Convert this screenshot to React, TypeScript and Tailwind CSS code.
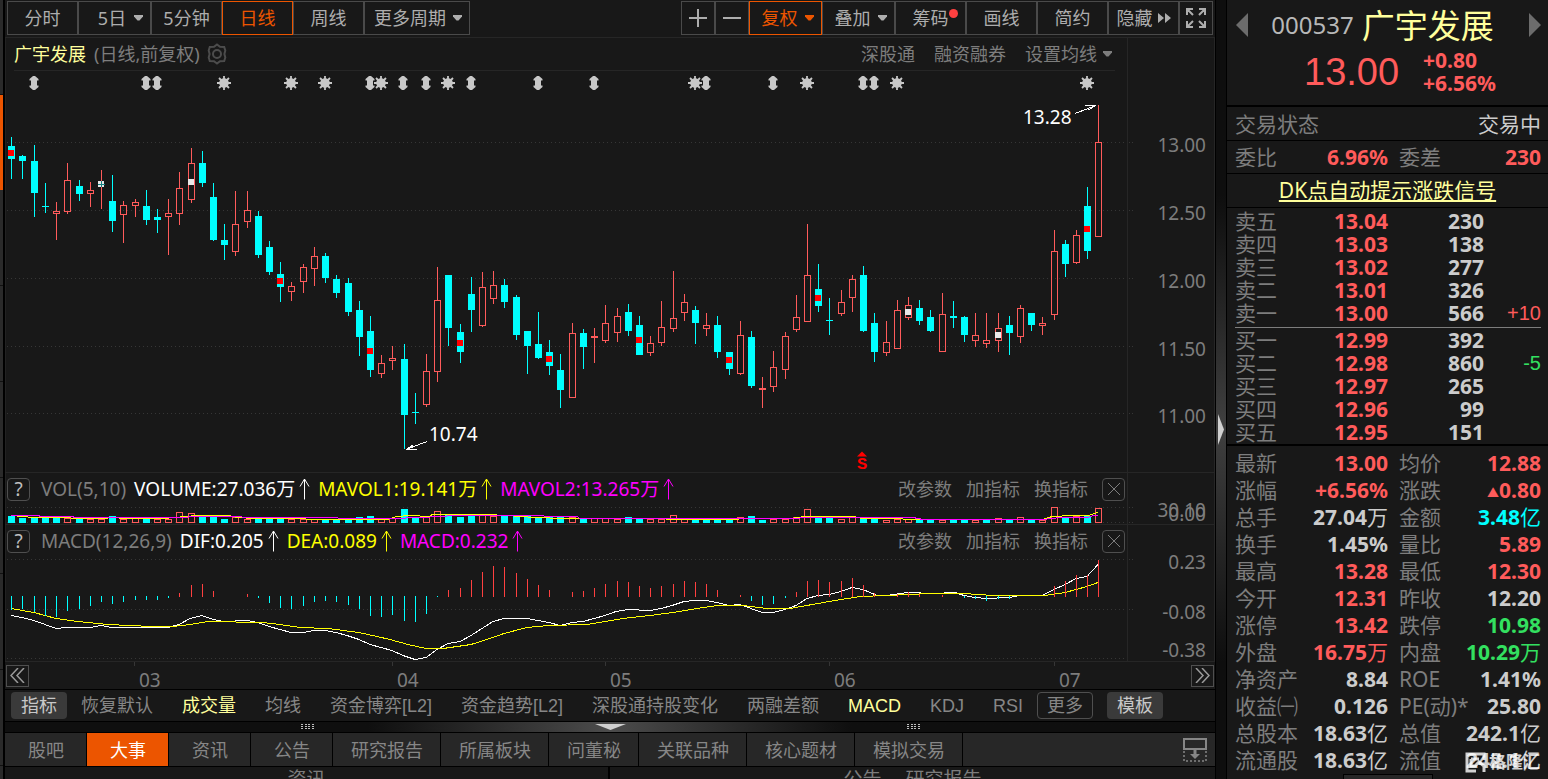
import type { ReactNode } from 'react';

type Tone = 'red' | 'green' | 'cyan' | 'plain';

const toneClass: Record<Tone, string> = {
  red: 'text-[#ff5b5b]',
  green: 'text-[#33e060]',
  cyan: 'text-[#00ffff]',
  plain: 'text-[#cccccc]',
};

const RED = '#ff5b5b';
const CYAN = '#00ffff';

// direction, high, body top, body bottom, low
type Candle = ['u' | 'd', number, number, number, number];

const candles: Candle[] = [
  ['d', 137, 146, 159, 179], ['d', 155, 156, 161, 179], ['d', 145, 161, 193, 217], ['d', 183, 206, 207, 213],
  ['u', 202, 211, 214, 240], ['u', 163, 180, 212, 214], ['d', 180, 186, 194, 201], ['u', 182, 190, 194, 207],
  ['u', 170, 184, 185, 209], ['d', 175, 201, 221, 232], ['u', 201, 205, 215, 243], ['u', 199, 202, 206, 217],
  ['d', 190, 206, 220, 225], ['d', 209, 217, 220, 233], ['u', 199, 213, 217, 255], ['u', 172, 188, 214, 225],
  ['u', 148, 163, 200, 203], ['d', 151, 163, 183, 187], ['d', 183, 197, 240, 241], ['d', 224, 240, 245, 260],
  ['u', 191, 224, 252, 256], ['u', 191, 210, 222, 228], ['d', 211, 216, 255, 258], ['d', 241, 247, 272, 275],
  ['d', 262, 274, 287, 302], ['u', 282, 286, 292, 301], ['u', 264, 267, 282, 293], ['u', 247, 256, 269, 286],
  ['d', 253, 256, 278, 283], ['d', 275, 279, 293, 298], ['d', 278, 283, 312, 316], ['d', 301, 310, 337, 356],
  ['d', 316, 331, 370, 377], ['u', 355, 363, 374, 378], ['u', 346, 358, 361, 370], ['d', 344, 359, 415, 449],
  ['d', 393, 412, 413, 424], ['u', 354, 371, 405, 407], ['u', 267, 300, 372, 382], ['d', 275, 275, 328, 346],
  ['d', 324, 332, 352, 363], ['d', 277, 294, 310, 332], ['u', 272, 287, 326, 327], ['u', 271, 285, 299, 304],
  ['d', 279, 285, 302, 308], ['d', 295, 297, 335, 340], ['d', 331, 331, 346, 374], ['d', 312, 344, 358, 359],
  ['d', 340, 352, 366, 375], ['d', 354, 370, 390, 408], ['u', 323, 333, 398, 398], ['d', 329, 333, 347, 369],
  ['u', 328, 336, 338, 363], ['u', 305, 323, 341, 343], ['u', 308, 316, 333, 342], ['d', 304, 312, 331, 336],
  ['d', 316, 325, 355, 355], ['u', 336, 343, 353, 356], ['u', 301, 327, 343, 346], ['u', 271, 318, 329, 332],
  ['u', 294, 302, 313, 321], ['d', 306, 310, 323, 344], ['u', 313, 325, 329, 336], ['d', 316, 325, 352, 358],
  ['d', 352, 352, 369, 375], ['u', 321, 335, 374, 375], ['d', 331, 337, 386, 388], ['u', 377, 388, 390, 408],
  ['u', 351, 367, 387, 392], ['u', 332, 336, 370, 379], ['u', 295, 317, 330, 332], ['u', 224, 275, 322, 322],
  ['d', 264, 289, 306, 312], ['d', 298, 320, 321, 335], ['u', 290, 302, 314, 316], ['u', 275, 279, 298, 312],
  ['d', 266, 275, 331, 332], ['d', 313, 323, 352, 362], ['u', 321, 342, 353, 356], ['u', 300, 310, 349, 349],
  ['u', 297, 305, 318, 320], ['d', 300, 308, 321, 325], ['d', 310, 317, 331, 332], ['u', 293, 314, 352, 352],
  ['d', 301, 316, 318, 328], ['d', 316, 317, 335, 342], ['u', 313, 335, 341, 347], ['u', 313, 340, 344, 348],
  ['u', 313, 328, 341, 352], ['d', 316, 325, 333, 355], ['u', 305, 308, 337, 343], ['d', 313, 313, 325, 331],
  ['u', 317, 323, 326, 335], ['u', 230, 251, 315, 320], ['d', 240, 244, 264, 277], ['u', 230, 235, 263, 264],
  ['d', 187, 206, 251, 259], ['u', 105, 142, 237, 237],
];

const volumeTops = [
  516, 518, 517, 517, 517, 518, 519, 519, 519, 516, 519, 518, 518, 519, 519, 512, 513, 517, 517, 519,
  517, 519, 518, 518, 517, 519, 519, 519, 519, 519, 519, 517, 516, 519, 518, 509, 518, 517, 511, 514,
  517, 514, 514, 516, 516, 516, 516, 517, 517, 517, 517, 518, 518, 518, 519, 517, 518, 519, 519, 515,
  518, 519, 519, 519, 519, 517, 516, 520, 519, 519, 517, 509, 518, 518, 519, 517, 517, 517, 520, 519,
  519, 519, 520, 520, 520, 520, 520, 520, 518, 520, 517, 520, 520, 507, 518, 516, 516, 508,
];

// days whose close moved against the candle body
const volumeFlips = [4, 13, 62, 67, 87];

const macdEnds = [
  610, 609, 612, 616, 617, 611, 609, 606, 602, 604, 602, 600, 600, 600, 598, 593, 585, 584, 591, 0,
  0, 594, 598, 603, 608, 609, 606, 602, 601, 602, 605, 609, 616, 617, 615, 621, 622, 614, 597, 590,
  588, 580, 572, 566, 567, 573, 579, 585, 590, 0, 592, 591, 588, 584, 581, 582, 586, 588, 586, 584,
  581, 582, 584, 590, 0, 595, 601, 605, 604, 598, 592, 581, 580, 582, 581, 578, 585, 593, 0, 594,
  592, 594, 0, 595, 0, 598, 599, 601, 599, 599, 0, 0, 0, 586, 581, 575, 575, 560,
];

const difPoints =
  '11,615 22,617 34,620 45,624 56,628 67,627 90,627 101,625 112,627 168,627 179,624 190,618 202,615 213,619 224,621 247,620 258,622 269,626 280,629 291,632 303,632 314,630 325,630 336,632 347,635 359,639 370,644 381,647 392,650 403,655 415,659 426,657 437,649 448,643 460,641 471,635 482,628 493,621 504,618 527,618 538,620 549,622 560,625 572,622 583,621 594,618 605,615 616,611 628,609 650,610 661,608 672,605 684,601 695,600 706,600 717,602 729,605 740,604 751,608 762,612 773,612 785,609 796,605 807,598 818,595 829,594 841,591 852,587 863,589 877,595 887,595 908,592 933,593 955,592 964,595 975,597 986,598 1009,597 1020,595 1042,595 1054,589 1065,584 1076,578 1087,576 1098,564';

const deaPoints =
  '11,608 34,612 56,618 78,621 108,624 152,626 173,626 190,624 208,621 263,622 280,624 300,627 328,628 359,632 377,636 390,639 408,644 426,648 443,648 471,644 490,638 504,633 527,627 549,625 587,624 605,621 623,618 650,615 673,612 697,608 717,605 743,605 767,608 790,608 818,603 829,601 860,596 887,595 930,593 964,593 993,595 1045,595 1065,592 1087,586 1098,582';

const maVol1 =
  '17,516 39,517 56,517 85,518 106,518 109,517 129,518 163,518 175,517 196,515 229,515 237,517 255,518 298,518 313,519 387,519 397,516 410,515 430,516 432,514 488,514 523,516 533,517 567,518 610,518 723,519 735,519 743,518 790,518 805,516 854,516 862,518 902,518 904,519 1043,519 1052,516 1072,515 1088,515 1098,512';

const maVol2 =
  '11,515 39,515 40,516 73,516 74,517 177,517 200,516 241,516 243,517 285,517 390,518 422,517 455,515 543,515 545,516 577,516 580,518 798,518 802,517 913,517 923,519 1043,519 1060,517 1088,517 1093,515 1098,515';

const redFlags = [[0, 150], [24, 278], [32, 348], [40, 340], [48, 356], [56, 337], [64, 357], [72, 295], [96, 226]];
const whiteFlags = [[8, 181], [16, 179], [80, 309], [88, 332]];

const splitMarks = [34, 146, 157, 370, 403, 426, 471, 538, 594, 706, 773, 863, 874];
const sunMarks = [224, 291, 325, 381, 448, 695, 807, 897, 1087];

const candleX = (i: number) => Math.floor(11.78 + 11.208 * i);

function Caret({ className = '' }: { className?: string }) {
  return (
    <svg viewBox="0 0 9 6" className={`h-[6px] w-[9px] ${className}`} fill="currentColor" aria-hidden="true">
      <path d="M0 0h9v1.500L5.500 5.500h-2L0 1.500z" />
    </svg>
  );
}

function BarButton({ children, className = '', active = false }: { children: ReactNode; className?: string; active?: boolean }) {
  return (
    <button
      type="button"
      className={`flex h-[34px] shrink-0 items-center justify-center whitespace-nowrap border ${
        active ? 'border-[#ec5500] text-[#ec5500]' : 'border-[#4a4a4a] text-[#adadad]'
      } ${className}`}
    >
      {children}
    </button>
  );
}

function Toolbar() {
  return (
    <div className="flex h-[38px] shrink-0 items-start justify-between border-b border-[#262626] px-0.5 pt-px">
      <div className="flex">
        <BarButton className="w-[71px]">分时</BarButton>
        <BarButton className="w-[73px] gap-2 pl-3"><span>5日</span><Caret /></BarButton>
        <BarButton className="w-[71px]">5分钟</BarButton>
        <BarButton className="w-[71px]" active>日线</BarButton>
        <BarButton className="w-[71px]">周线</BarButton>
        <BarButton className="w-[106px] gap-[7px] pl-0.5"><span>更多周期</span><Caret /></BarButton>
      </div>
      <div className="flex">
        <BarButton className="w-[34px]">
          <svg viewBox="0 0 18 18" className="h-[18px] w-[18px]" stroke="currentColor" strokeWidth="2" role="img" aria-label="放大"><path d="M0 9h18M9 0v18" /></svg>
        </BarButton>
        <BarButton className="w-[34px]">
          <svg viewBox="0 0 18 18" className="h-[18px] w-[18px]" stroke="currentColor" strokeWidth="2" role="img" aria-label="缩小"><path d="M0 9h18" /></svg>
        </BarButton>
        <BarButton className="w-[73px] gap-[7px] pl-1" active><span>复权</span><Caret /></BarButton>
        <BarButton className="w-[73px] gap-[7px] pl-1"><span>叠加</span><Caret /></BarButton>
        <BarButton className="relative w-[71px]">
          筹码
          <span className="absolute right-[7px] top-[7px] h-[9px] w-[9px] rounded-full bg-[#ff4040]" />
        </BarButton>
        <BarButton className="w-[71px]">画线</BarButton>
        <BarButton className="w-[71px]">简约</BarButton>
        <BarButton className="w-[71px] gap-[5px]">
          <span>隐藏</span>
          <svg viewBox="0 0 13 10" className="h-[10px] w-[13px]" fill="currentColor" aria-hidden="true"><path d="M0 0l6 5-6 5zM7 0l6 5-6 5z" /></svg>
        </BarButton>
        <BarButton className="w-[34px]">
          <svg viewBox="0 0 20 20" className="h-5 w-5" fill="none" stroke="currentColor" strokeWidth="2" role="img" aria-label="全屏">
            <path d="M1 7V1h6M1 1l6 6M13 1h6v6M19 1l-6 6M1 13v6h6M1 19l6-6M19 13v6h-6M19 19l-6-6" />
          </svg>
        </BarButton>
      </div>
    </div>
  );
}

function GearIcon() {
  return (
    <svg viewBox="0 0 22 22" className="h-[22px] w-[22px]" fill="none" stroke="#4c4c4c" strokeWidth="2" role="img" aria-label="设置">
      <path d="M11 1.500l3 2.300 4.200.200 1.100 3.500-.900 3.500.900 3.500-1.100 3.500-4.200.200-3 2.300-3-2.300-4.200-.200-1.100-3.500.900-3.500-.900-3.500 1.100-3.500 4.200-.200z" />
      <circle cx="11" cy="11" r="4" />
    </svg>
  );
}

function DottedLine({ y }: { y: number }) {
  return <line x1="7" x2="1127" y1={y + 0.5} y2={y + 0.5} stroke="#363636" strokeDasharray="1 3" />;
}

function CandleChart() {
  return (
    <svg viewBox="6 71 1121 401" className="block h-[401px] w-full" shapeRendering="crispEdges" role="img" aria-label="日线">
      {[142, 210, 278, 346, 413].map((y) => <DottedLine key={y} y={y} />)}
      {candles.map(([dir, high, top, bottom, low], i) => {
        const x = candleX(i);
        const h = bottom - top;
        if (dir === 'd') {
          return (
            <g key={i} fill={CYAN}>
              <rect x={x} y={high} width="1" height={low - high} />
              <rect x={x - 3} y={top} width="7" height={h} />
            </g>
          );
        }
        return (
          <g key={i} fill={RED}>
            <rect x={x} y={high} width="1" height={top - high} />
            <rect x={x} y={bottom} width="1" height={low - bottom} />
            {h > 2 ? (
              <rect x={x - 2.5} y={top + 0.5} width="6" height={h - 1} fill="none" stroke={RED} />
            ) : (
              <rect x={x - 3} y={top} width="7" height={h} />
            )}
          </g>
        );
      })}
      {redFlags.map(([i, y]) => <rect key={i} x={candleX(i) - 3} y={y} width="6" height="6" fill="#ff0000" />)}
      {whiteFlags.map(([i, y]) => <rect key={i} x={candleX(i) - 3} y={y} width="6" height="6" fill="#e8e8e8" />)}
      <path d="M98 184.500h7M101.500 181v6" stroke="#138080" />

      <g fill="#c8c8c8" shapeRendering="auto">
        {splitMarks.map((x) => (
          <path key={x} transform={`translate(${x} 83)`} d="M-1-7H1L4.500-4V-2.500H3V2.500H4.500V4L1 7H-1L-4.500 4V2.500H-3V-2.500H-4.500V-4Z" />
        ))}
        {sunMarks.map((x) => (
          <g key={x} transform={`translate(${x} 83)`}>
            <circle r="4.800" />
            <path d="M0-7V7M-7 0H7M-5-5L5 5M-5 5L5-5" stroke="#c8c8c8" strokeWidth="1.800" />
          </g>
        ))}
      </g>

      <g stroke="#ffffff" fill="none">
        <path d="M1075 113.500L1096 105.500M1096 105.500H1085M1096 105.500L1088 110" />
        <path d="M427 441.500L406 449.500M406 449.500H417M406 449.500L413 445" />
      </g>
      <g fill="#ffffff" className="text-[19px]">
        <text x="1023" y="124">13.28</text>
        <text x="429" y="441">10.74</text>
      </g>
      <g fill="#ff0000" shapeRendering="auto">
        <path d="M857 456.500L862 451.500L867 456.500Z" />
        <text x="862" y="469" textAnchor="middle" className="font-['Liberation_Mono',monospace] text-[17px] font-bold">S</text>
      </g>
    </svg>
  );
}

function VolumeChart() {
  return (
    <svg viewBox="6 505 1121 19" className="block h-[19px] w-full" shapeRendering="crispEdges" role="img" aria-label="成交量">
      <DottedLine y={507} />
      <DottedLine y={522} />
      {volumeTops.map((top, i) => {
        const up = (candles[i][0] === 'u') !== volumeFlips.includes(i);
        const x = candleX(i);
        return up ? (
          <rect key={i} x={x - 2.5} y={top + 0.5} width="6" height={522 - top} fill="none" stroke={RED} />
        ) : (
          <rect key={i} x={x - 3} y={top} width="7" height={523 - top} fill={CYAN} />
        );
      })}
      <polyline points={maVol1} transform="translate(0 .5)" fill="none" stroke="#ffff00" />
      <polyline points={maVol2} transform="translate(0 .5)" fill="none" stroke="#ff00ff" />
    </svg>
  );
}

function MacdChart() {
  return (
    <svg viewBox="6 557 1121 104" className="block h-[104px] w-full" shapeRendering="crispEdges" role="img" aria-label="MACD">
      {[559, 609, 658].map((y) => <DottedLine key={y} y={y} />)}
      <polyline points={difPoints} transform="translate(0 .5)" fill="none" stroke="#ffffff" />
      <polyline points={deaPoints} transform="translate(0 .5)" fill="none" stroke="#ffff00" />
      {macdEnds.map((end, i) => {
        if (!end) return null;
        return end > 596 ? (
          <rect key={i} x={candleX(i)} y="596" width="1" height={end - 596} fill={CYAN} />
        ) : (
          <rect key={i} x={candleX(i)} y={end} width="1" height={597 - end} fill="#ff4040" />
        );
      })}
    </svg>
  );
}

function Axis({ top, height, labels, ticks }: { top: number; height: number; labels: [string, number][]; ticks: number[] }) {
  return (
    <div className="w-[88px] shrink-0 border-l border-r border-[#262626]">
      <svg viewBox={`1128 ${top} 86 ${height}`} className="block w-full" height={height} fill="#7d7d7d">
        {ticks.map((y) => <path key={y} d={`M1129 ${y + 0.5}h4`} stroke="#363636" strokeDasharray="1 2" />)}
        {labels.map(([text, y]) => (
          <text key={text} x="1206" y={y} textAnchor="end" className="text-[19px]">{text}</text>
        ))}
      </svg>
    </div>
  );
}

function UpArrow() {
  return (
    <svg viewBox="0 0 11 22" className="ml-1 mr-2 h-[22px] w-[11px]" fill="none" stroke="currentColor" aria-hidden="true">
      <path d="M5.500 1V21.500M5.500 1L1 8.500M5.500 1L10 8.500" />
    </svg>
  );
}

function IndicatorHeader({ name, values }: { name: string; values: [string, string][] }) {
  return (
    <div className="flex h-8 items-center justify-between whitespace-nowrap pl-px pr-0.5 text-[#7d7d7d]">
      <div className="flex items-center text-[19px]">
        <button type="button" className="mr-[11px] flex h-[23px] w-[23px] items-center justify-center rounded-sm border border-[#4f4f4f] text-[#c0c0c0]">?</button>
        <span className="mr-2">{name}</span>
        {values.map(([text, color]) => (
          <span key={text} className={`flex items-center ${color}`}>{text}<UpArrow /></span>
        ))}
      </div>
      <div className="flex items-center gap-[14px]">
        <button type="button">改参数</button>
        <button type="button">加指标</button>
        <button type="button">换指标</button>
        <button type="button" aria-label="关闭" className="flex h-[23px] w-[23px] items-center justify-center rounded-sm border border-[#4f4f4f]">
          <svg viewBox="0 0 12 12" className="h-3 w-3" stroke="currentColor"><path d="M0 0l12 12M12 0L0 12" /></svg>
        </button>
      </div>
    </div>
  );
}

function MonthRow() {
  const months: [string, number][] = [['03', 134], ['04', 392], ['05', 605], ['06', 829], ['07', 1054]];
  return (
    <div className="flex h-[27px] shrink-0 items-center justify-between px-px text-[#9a9a9a]">
      <button type="button" aria-label="向前" className="flex h-[22px] w-[23px] items-center justify-center border border-[#4f4f4f]">
        <svg viewBox="0 0 15 15" className="h-[15px] w-[15px]" fill="none" stroke="currentColor" strokeWidth="1.5"><path d="M8 0L1 7.500L8 15M14 0L7 7.500L14 15" /></svg>
      </button>
      <svg viewBox="29 662 1162 27" className="h-[27px] min-w-0 flex-1" fill="#7d7d7d">
        {months.map(([m, x]) => (
          <g key={m}>
            <path d={`M${x + 0.5} 661v5`} stroke="#363636" />
            <text x={x + 5} y="687" className="text-[19px]">{m}</text>
          </g>
        ))}
      </svg>
      <button type="button" aria-label="向后" className="flex h-[22px] w-[23px] items-center justify-center border border-[#4f4f4f]">
        <svg viewBox="0 0 15 15" className="h-[15px] w-[15px]" fill="none" stroke="currentColor" strokeWidth="1.5"><path d="M1 0L8 7.500L1 15M7 0L14 7.500L7 15" /></svg>
      </button>
    </div>
  );
}

function IndicatorBar() {
  const items = ['恢复默认', '成交量', '均线', '资金博弈[L2]', '资金趋势[L2]', '深股通持股变化', '两融差额', 'MACD', 'KDJ', 'RSI'];
  return (
    <div className="flex h-[33px] shrink-0 items-center whitespace-nowrap border-y border-black pl-1.5 font-['Liberation_Sans','Noto_Sans_CJK_SC',sans-serif] text-[#868686]">
      <button type="button" className="mr-[14px] h-[27px] w-14 rounded-sm bg-[#3a3a3a] text-[#c8c8c8]">指标</button>
      <div className="flex gap-[29px]">
        {items.map((item) => (
          <button key={item} type="button" className={item === '成交量' || item === 'MACD' ? 'text-[#ffff9c]' : ''}>{item}</button>
        ))}
      </div>
      <button type="button" className="ml-[14px] h-[27px] w-14 rounded-sm border border-[#4f4f4f]">更多</button>
      <button type="button" className="ml-[14px] h-[27px] w-14 rounded-sm bg-[#3a3a3a] text-[#c8c8c8]">模板</button>
    </div>
  );
}

function GripDots() {
  return (
    <svg viewBox="0 0 13 6" className="h-[6px] w-[13px]" fill="#c0c0c0" shapeRendering="crispEdges" aria-hidden="true">
      {[0, 4, 7, 11].map((x) => [0, 2, 4].map((y) => <rect key={`${x}-${y}`} x={x} y={y} width="2" height="1" />))}
    </svg>
  );
}

function NewsTabs() {
  const tabs = ['股吧', '大事', '资讯', '公告', '研究报告', '所属板块', '问董秘', '关联品种', '核心题材', '模拟交易'];
  return (
    <div className="flex h-[35px] shrink-0 items-stretch border-y border-black bg-[#272727] text-[#868686]">
      {tabs.map((tab) => (
        <button
          key={tab}
          type="button"
          className={`min-w-[82px] whitespace-nowrap border-r border-black pl-[18px] pr-[17px] ${tab === '大事' ? 'bg-[#ec5500] text-white' : ''}`}
        >
          {tab}
        </button>
      ))}
      <button type="button" aria-label="停靠" className="ml-auto mr-2">
        <svg viewBox="0 0 24 24" className="h-6 w-6" fill="none" stroke="#868686" strokeWidth="2">
          <path d="M1 11V1h22v10z" />
          <path d="M1 13v10h22V12" strokeDasharray="2 2" strokeWidth="1.500" />
          <path d="M12 12v6" strokeWidth="3" />
          <path d="M7 16h10l-5 5z" fill="#868686" stroke="none" />
        </svg>
      </button>
    </div>
  );
}

type BookRow = [string, string, string, string?];

const sells: BookRow[] = [
  ['卖五', '13.04', '230'], ['卖四', '13.03', '138'], ['卖三', '13.02', '277'], ['卖二', '13.01', '326'], ['卖一', '13.00', '566', '+10'],
];
const buys: BookRow[] = [
  ['买一', '12.99', '392'], ['买二', '12.98', '860', '-5'], ['买三', '12.97', '265'], ['买四', '12.96', '99'], ['买五', '12.95', '151'],
];

function BookTable({ rows }: { rows: BookRow[] }) {
  return (
    <table className="w-full table-fixed leading-[23px]">
      <tbody>
        {rows.map(([label, price, volume, delta]) => (
          <tr key={label} className="h-[23px]">
            <th scope="row" className="w-[60px] p-0 text-left font-normal text-[#7d7d7d]">{label}</th>
            <td className="w-[93px] p-0 text-right font-bold text-[#ff5b5b]">{price}</td>
            <td className="w-24 p-0 text-right font-bold text-[#cccccc]">{volume}</td>
            <td className={`p-0 text-right align-top font-['Liberation_Sans',sans-serif] text-[20px] leading-[22px] ${delta?.startsWith('-') ? 'text-[#33e060]' : 'text-[#ff5b5b]'}`}>{delta}</td>
          </tr>
        ))}
      </tbody>
    </table>
  );
}

type Stat = [string, string, Tone];

const stats: [Stat, Stat][] = [
  [['最新', '13.00', 'red'], ['均价', '12.88', 'red']],
  [['涨幅', '+6.56%', 'red'], ['涨跌', '▲0.80', 'red']],
  [['总手', '27.04万', 'plain'], ['金额', '3.48亿', 'cyan']],
  [['换手', '1.45%', 'plain'], ['量比', '5.89', 'red']],
  [['最高', '13.28', 'red'], ['最低', '12.30', 'red']],
  [['今开', '12.31', 'red'], ['昨收', '12.20', 'plain']],
  [['涨停', '13.42', 'red'], ['跌停', '10.98', 'green']],
  [['外盘', '16.75万', 'red'], ['内盘', '10.29万', 'green']],
  [['净资产', '8.84', 'plain'], ['ROE', '1.41%', 'plain']],
  [['收益㈠', '0.126', 'plain'], ['PE(动)*', '25.80', 'plain']],
  [['总股本', '18.63亿', 'plain'], ['总值', '242.1亿', 'plain']],
  [['流通股', '18.63亿', 'plain'], ['流值', '242.1亿', 'plain']],
];

function StatCells({ stat: [label, value, tone], labelClass, valueClass = '' }: { stat: Stat; labelClass: string; valueClass?: string }) {
  const unit = /[万亿]$/.test(value) ? value.slice(-1) : '';
  const rising = value.startsWith('▲');
  const digits = value.replace(/[▲万亿]/g, '');
  return (
    <>
      <th scope="row" className={`p-0 text-left font-normal text-[#7d7d7d] ${labelClass}`}>{label}</th>
      <td className={`p-0 text-right font-bold ${toneClass[tone]} ${valueClass}`}>
        {rising && <span className="text-[12px] leading-none">▲</span>}
        {digits}
        {unit && <span className="font-normal">{unit}</span>}
      </td>
    </>
  );
}

function Watermark() {
  return (
    <div className="absolute bottom-0 right-2 flex items-center gap-[3px] text-white/80">
      <svg viewBox="0 0 21 21" className="h-[21px] w-[21px]" fill="none" stroke="currentColor" strokeWidth="3" aria-hidden="true">
        <path d="M19 8V2H2v17h9M6 7h8M6 7v7h4l4-4 5 4v6" />
      </svg>
      <span className="text-[17px] font-bold leading-6">格隆汇</span>
    </div>
  );
}

function QuotePanel() {
  return (
    <aside className="w-[321px] shrink-0 whitespace-nowrap text-[21px]">
      <header className="h-[107px] border-b-2 border-black">
        <div className="flex h-12 items-center justify-between pl-[9px] pr-[7px] pt-0.5">
          <button type="button" aria-label="上一只"><svg viewBox="0 0 12 24" className="h-6 w-3" fill="#6c6c6c"><path d="M12 0v24L0 12z" /></svg></button>
          <h1 className="flex items-center gap-2 pr-3">
            <span className="text-[24px] text-[#b8b8b8]">000537</span>
            <span className="text-[33px] leading-none text-[#ffff9c]">广宇发展</span>
          </h1>
          <button type="button" aria-label="下一只"><svg viewBox="0 0 12 24" className="h-6 w-3" fill="#6c6c6c"><path d="M0 0v24l12-12z" /></svg></button>
        </div>
        <div className="flex items-center justify-center gap-6 pl-[25px] text-[#ff5b5b]">
          <span className="font-['Liberation_Sans',sans-serif] text-[38px] leading-[46px]">13.00</span>
          <span className="pt-px font-bold leading-[23px]">+0.80<br />+6.56%</span>
        </div>
      </header>
      <div className="flex h-[34px] items-center justify-between border-b border-black pl-2 pr-[7px]">
        <span className="text-[#7d7d7d]">交易状态</span>
        <span className="text-[#cccccc]">交易中</span>
      </div>
      <div className="flex h-[33px] items-center border-b border-black pb-px pl-2 pr-[7px]">
        <span className="text-[#7d7d7d]">委比</span>
        <span className="w-[111px] text-right font-bold text-[#ff5b5b]">6.96%</span>
        <span className="ml-[11px] text-[#7d7d7d]">委差</span>
        <span className="ml-auto font-bold text-[#ff5b5b]">230</span>
      </div>
      <div className="flex h-[34px] items-center justify-center border-b border-black pb-0.5">
        <a href="#dk" className="text-[#ffff9c] underline underline-offset-2">DK点自动提示涨跌信号</a>
      </div>
      <div className="border-b-2 border-black pl-2 pr-[7px] pt-[2px]">
        <BookTable rows={sells} />
        <div className="mb-px mt-[2px] border-t border-[#7d7d7d]" />
        <BookTable rows={buys} />
      </div>
      <div className="relative pl-2 pr-[7px] pt-1">
        <table className="w-full table-fixed leading-[27px]">
          <tbody>
            {stats.map(([left, right]) => (
              <tr key={left[0]} className="h-[27px]">
                <StatCells stat={left} labelClass="w-16" valueClass="w-[89px]" />
                <StatCells stat={right} labelClass="w-[75px] pl-[11px]" />
              </tr>
            ))}
          </tbody>
        </table>
        <Watermark />
      </div>
      <div className="mx-auto w-[90px] border border-black bg-[#272727] pt-1" />
    </aside>
  );
}

export default function App() {
  return (
    <div className="flex h-screen w-full overflow-hidden bg-[#181818] font-['Noto_Sans','Noto_Sans_CJK_SC',sans-serif] text-[18px] leading-6">
      <nav className="flex w-[5px] shrink-0 flex-col border-r-2 border-black bg-[#2a2a2a]">
        <div className="h-[95px] shrink-0 border-b border-[#111111]" />
        <div className="h-[95px] shrink-0 bg-[#ec5500]" />
        {[1, 2, 3, 4, 5, 6].map((n) => <div key={n} className="h-24 shrink-0 border-b border-[#111111]" />)}
      </nav>

      <main className="flex min-w-0 flex-1 flex-col">
        <Toolbar />
        <section className="flex shrink-0 border-b border-[#262626]">
          <div className="min-w-0 flex-1 border-l border-[#222222]">
            <div className="ml-2 mr-3 flex h-[33px] items-center justify-between whitespace-nowrap border-b border-[#262626] text-[#7d7d7d]">
              <div className="flex items-center">
                <h2 className="mr-2 text-[#ffff9c]">广宇发展</h2>
                <span className="mr-1.5">(日线,前复权)</span>
                <GearIcon />
              </div>
              <div className="flex items-center gap-[19px] pr-[3px]">
                <a href="#sgt">深股通</a>
                <a href="#rzrq">融资融券</a>
                <button type="button" className="flex items-center gap-1.5">设置均线<Caret /></button>
              </div>
            </div>
            <CandleChart />
          </div>
          <Axis
            top={38}
            height={434}
            ticks={[142, 210, 278, 346, 413]}
            labels={[['13.00', 152], ['12.50', 220], ['12.00', 288], ['11.50', 356], ['11.00', 423]]}
          />
        </section>

        <section className="flex shrink-0 border-b border-[#262626]">
          <div className="min-w-0 flex-1 border-l border-[#222222]">
            <IndicatorHeader
              name="VOL(5,10)"
              values={[['VOLUME:27.036万', 'text-white'], ['MAVOL1:19.141万', 'text-[#ffff00]'], ['MAVOL2:13.265万', 'text-[#ff00ff]']]}
            />
            <VolumeChart />
          </div>
          <Axis top={473} height={51} ticks={[507, 522]} labels={[['30.10', 517], ['0.00', 521]]} />
        </section>

        <section className="flex shrink-0 border-b border-[#262626]">
          <div className="min-w-0 flex-1 border-l border-[#222222]">
            <IndicatorHeader
              name="MACD(12,26,9)"
              values={[['DIF:0.205', 'text-white'], ['DEA:0.089', 'text-[#ffff00]'], ['MACD:0.232', 'text-[#ff00ff]']]}
            />
            <MacdChart />
          </div>
          <Axis top={525} height={136} ticks={[559, 609]} labels={[['0.23', 569], ['-0.08', 619], ['-0.38', 657]]} />
        </section>

        <MonthRow />
        <IndicatorBar />
        <div className="flex h-[10px] shrink-0 items-center justify-center gap-[281px] bg-linear-to-r from-[#0f0f0f] from-30% via-[#4c4c4c] to-[#0f0f0f] to-70%">
          <GripDots />
          <svg viewBox="0 0 31 6" className="h-[6px] w-[31px]" fill="#d0d0d0" aria-hidden="true"><path d="M0 0h31L15.500 6z" /></svg>
          <GripDots />
        </div>
        <NewsTabs />
        <div className="flex h-[30px] shrink-0 text-[19px] text-[#7d7d7d]">
          <div className="w-1/2 border-r-2 border-black text-center">资讯</div>
          <div className="flex w-1/2 justify-center gap-6"><span>公告</span><span>研究报告</span></div>
        </div>
      </main>

      <div className="flex w-3 shrink-0 items-center border-x border-black bg-linear-to-b from-[#0e0e0e] from-25% via-[#404040] via-55% to-[#0e0e0e] to-85%">
        <svg viewBox="0 0 6 31" className="mb-[-80px] ml-0.5 h-[31px] w-[6px]" fill="#d0d0d0" aria-hidden="true"><path d="M0 0v31l6-15.500z" /></svg>
      </div>
      <QuotePanel />
    </div>
  );
}
